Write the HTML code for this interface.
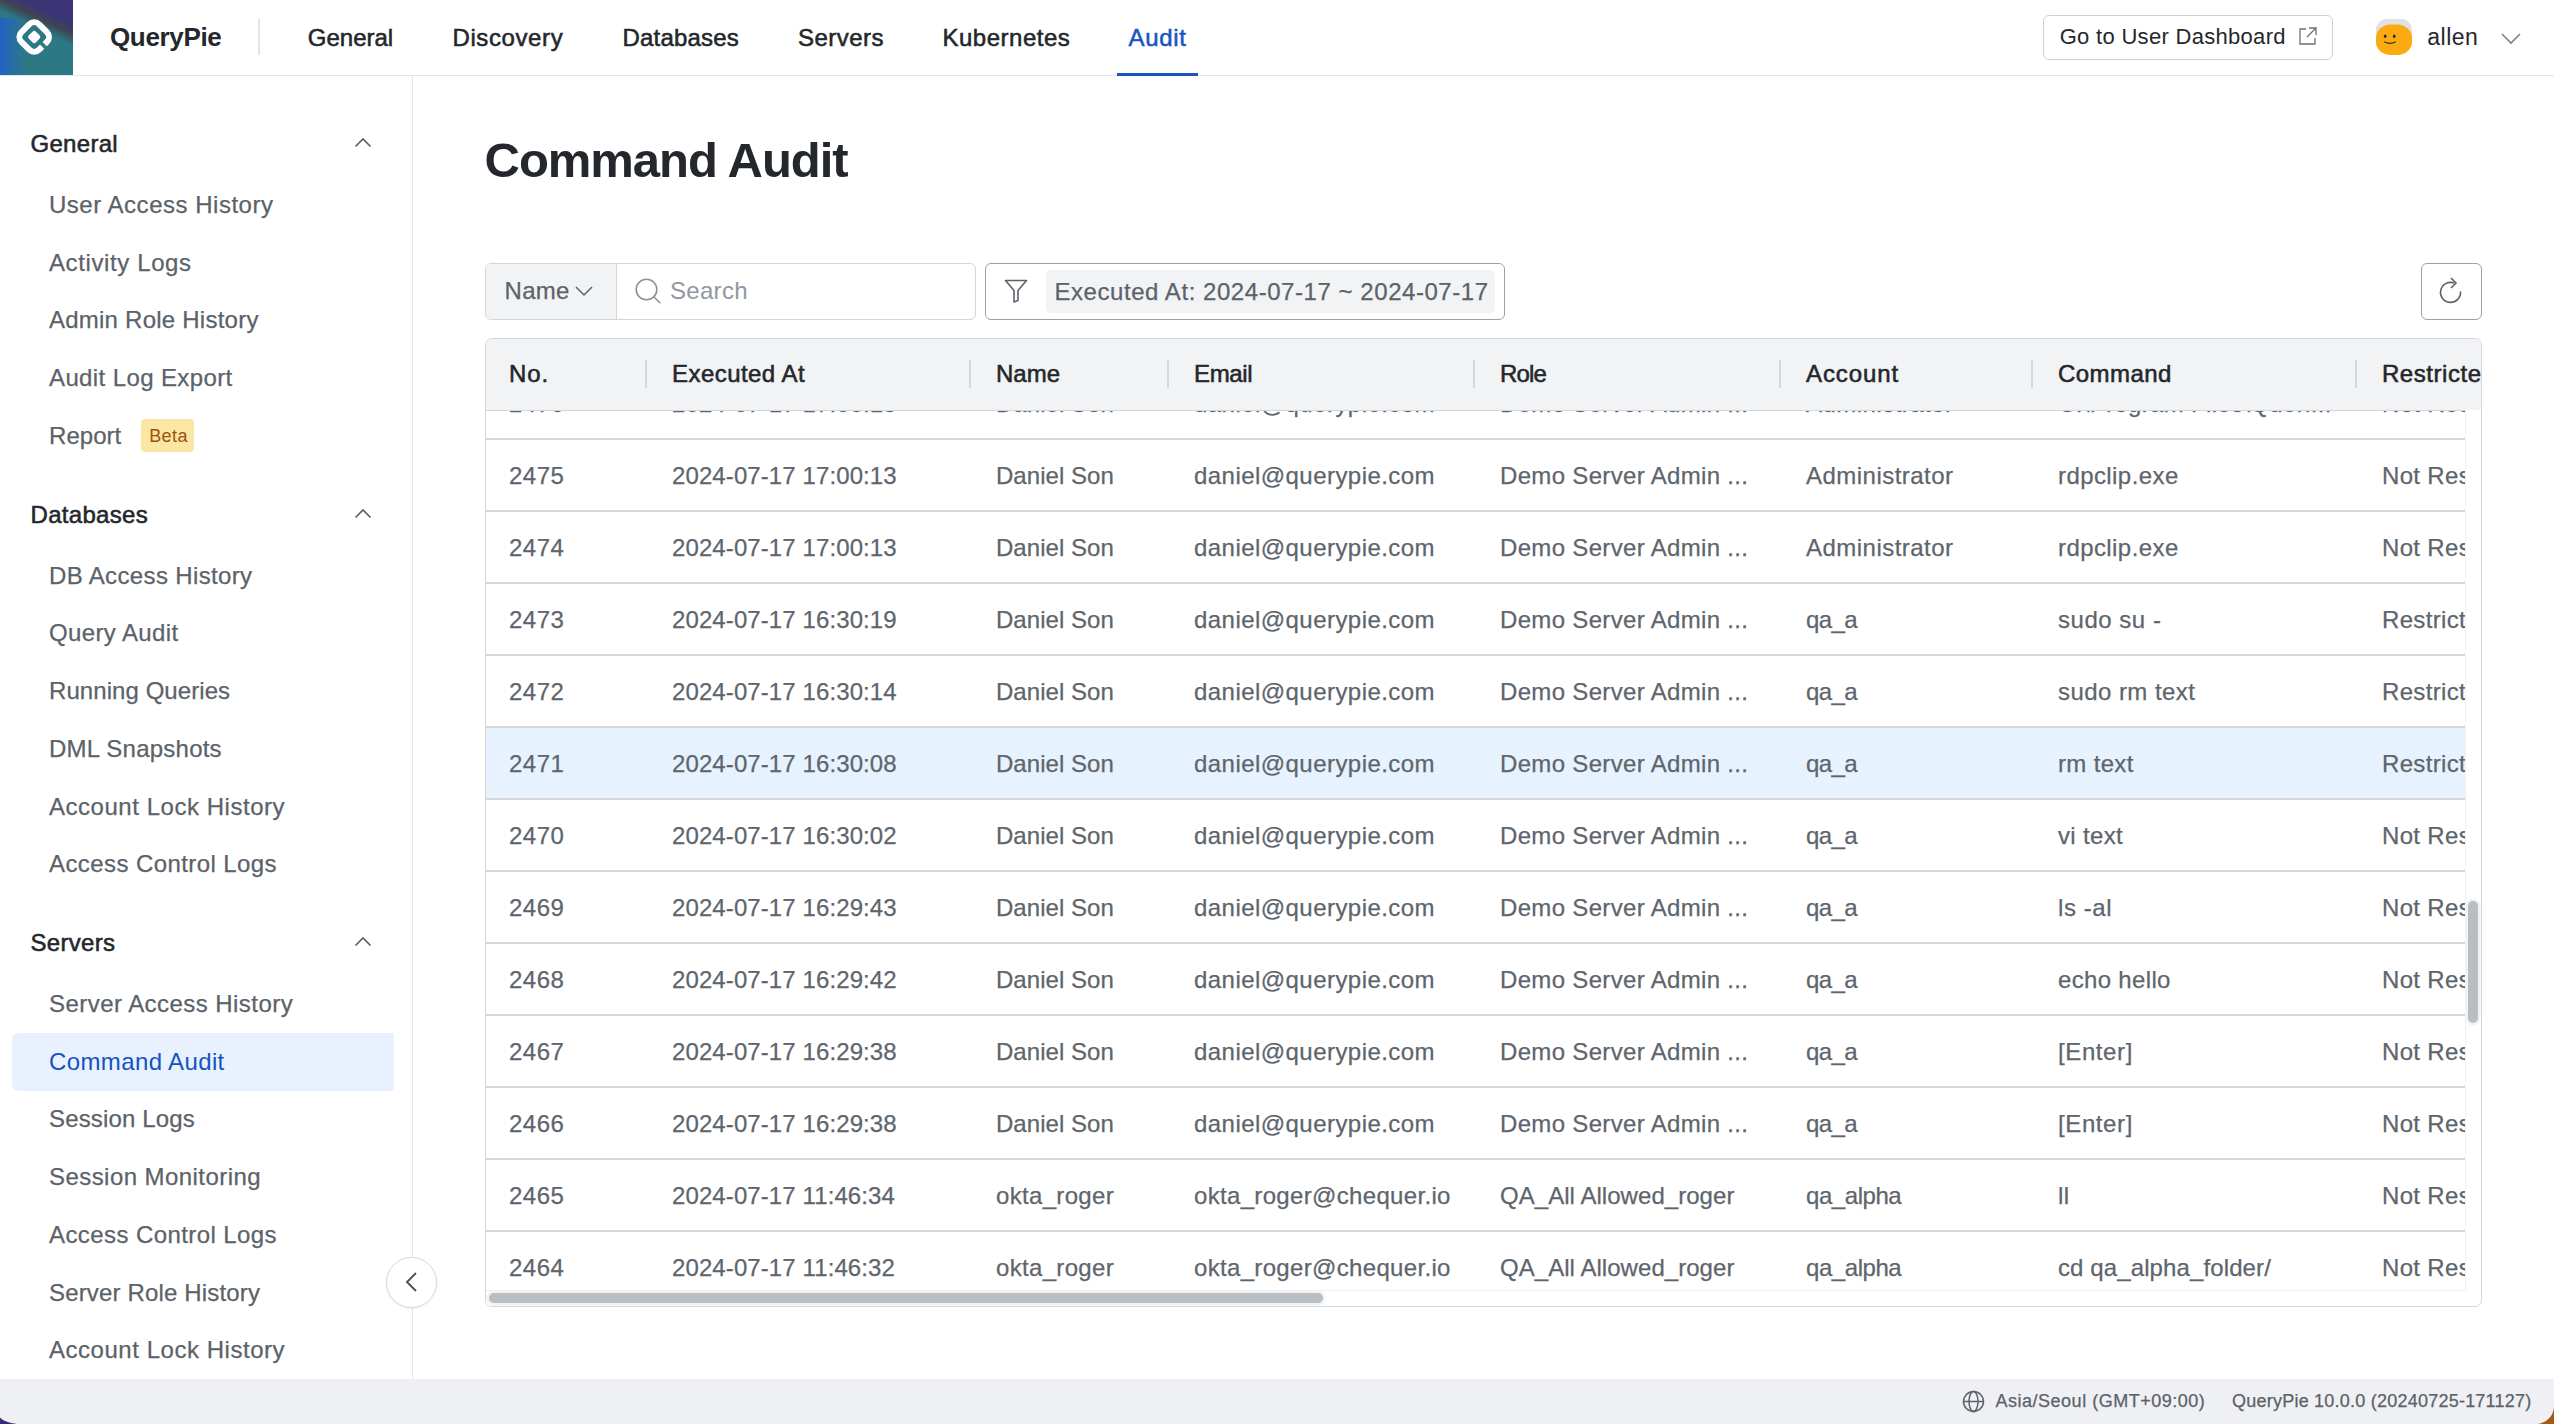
<!DOCTYPE html><html><head><meta charset="utf-8"><style>
*{margin:0;padding:0;box-sizing:border-box}
html,body{width:2554px;height:1424px;overflow:hidden;background:#fff}
body{font-family:"Liberation Sans",sans-serif;color:#25282c;position:relative}
.a{position:absolute;white-space:nowrap}
.t24{font-size:24px;line-height:24px}
.dk{color:#24272b}
.gr{color:#5b6269;-webkit-text-stroke:0.25px currentColor}
.med{-webkit-text-stroke:0.55px currentColor}
#hdr{position:absolute;left:0;top:0;width:2554px;height:76px;border-bottom:1px solid #e3e5e8;background:#fff}
#side{position:absolute;left:0;top:76px;width:413px;height:1303px;border-right:1px solid #e3e5e8;background:#fff}
#foot{position:absolute;left:0;top:1379px;width:2554px;height:45px;background:#eff0f3}
.sep{position:absolute;top:22px;width:2px;height:27px;background:#d3d6da}
.row{position:absolute;left:0;width:1980px;height:72px;background:#fff}
.rl{position:absolute;left:0;height:2px;background:#d5d7db}
.cell{position:absolute;top:27px;font-size:24px;line-height:24px;color:#5e656c;white-space:nowrap;-webkit-text-stroke:0.25px currentColor}
</style></head><body>
<div id="hdr">
<svg class="a" style="left:0;top:0" width="73" height="75" viewBox="0 0 73 75">
  <defs>
    <linearGradient id="lg1" gradientUnits="userSpaceOnUse" x1="60" y1="-10" x2="30" y2="53">
      <stop offset="0" stop-color="#3b3277"/><stop offset="0.36" stop-color="#3c3474"/>
      <stop offset="0.5" stop-color="#3d4652"/><stop offset="0.64" stop-color="#2c7886"/>
      <stop offset="1" stop-color="#2d7885"/>
    </linearGradient>
    <linearGradient id="lg2" x1="0" y1="0" x2="1" y2="0">
      <stop offset="0" stop-color="#1f5fd0" stop-opacity="0.85"/>
      <stop offset="0.35" stop-color="#1f5fd0" stop-opacity="0"/>
    </linearGradient>
  </defs>
  <rect width="73" height="75" fill="url(#lg1)"/>
  <rect x="0" y="18" width="73" height="57" fill="url(#lg2)"/>
  <g transform="translate(34.2 37) rotate(45)">
    <rect x="-12.5" y="-12.5" width="25" height="25" rx="7" fill="#2d7885" stroke="#fff" stroke-width="6"/>
    <rect x="-5" y="-5" width="10" height="10" rx="2.5" fill="#fff"/>
  </g>
  <path d="M39.5 41.5 L47 49" stroke="#2d7885" stroke-width="3.5"/>
</svg>
<div class="a dk" style="left:110px;top:23.59px;font-size:26px;line-height:26px;font-weight:bold;letter-spacing:-0.35px">QueryPie</div>
<div class="a" style="left:258px;top:19px;width:2px;height:36px;background:#e3e5e8"></div>
<div class="a t24 dk med" style="left:307.8px;top:25.58px;letter-spacing:0px">General</div>
<div class="a t24 dk med" style="left:452.5px;top:25.58px;letter-spacing:0.6px">Discovery</div>
<div class="a t24 dk med" style="left:622.5px;top:25.58px;letter-spacing:0.18px">Databases</div>
<div class="a t24 dk med" style="left:798px;top:25.58px;letter-spacing:0.45px">Servers</div>
<div class="a t24 dk med" style="left:942.5px;top:25.58px;letter-spacing:0.5px">Kubernetes</div>
<div class="a t24 med" style="left:1128.5px;top:25.58px;color:#1a56c0;letter-spacing:0.65px">Audit</div>
<div class="a" style="left:1117px;top:73px;width:81px;height:3px;background:#1a56c0"></div>
<div class="a" style="left:2043px;top:15px;width:290px;height:45px;border:1px solid #cfd3d8;border-radius:6px"></div>
<div class="a dk" style="left:2059.7px;top:26.28px;font-size:22px;line-height:22px;letter-spacing:0.3px">Go to User Dashboard</div>
<svg class="a" style="left:2297px;top:25px" width="22" height="22" viewBox="0 0 22 22">
  <path d="M9 4 H3 V19 H18 V13" fill="none" stroke="#6b7178" stroke-width="1.3"/>
  <path d="M12 3 H19 V10 M19 3 L10 12" fill="none" stroke="#6b7178" stroke-width="1.3"/>
</svg>
<svg class="a" style="left:2375px;top:18px" width="38" height="38" viewBox="0 0 38 38">
  <rect x="1" y="1" width="36" height="24" rx="11" fill="#dfe1e5"/>
  <rect x="1" y="6.5" width="36" height="30.5" rx="15" ry="13" fill="#fbab0f"/>
  <ellipse cx="10.2" cy="18.2" rx="1.3" ry="1.7" fill="#1e2a3a"/>
  <ellipse cx="19.2" cy="18.2" rx="1.3" ry="1.7" fill="#1e2a3a"/>
  <path d="M9.8 24 Q15 26.8 20.2 24" fill="none" stroke="#1e2a3a" stroke-width="1.3" stroke-linecap="round"/>
</svg>
<div class="a dk" style="left:2427.3px;top:26.43px;font-size:23px;line-height:23px;letter-spacing:0.5px">allen</div>
<svg class="a" style="left:2500px;top:31px" width="22" height="16" viewBox="0 0 22 16">
  <path d="M2 3 L11 12 L20 3" fill="none" stroke="#7b8289" stroke-width="1.6"/>
</svg>
</div>
<div id="side"></div>
<div class="a t24 dk med" style="left:30.5px;top:132.18px;letter-spacing:0.3px">General</div>
<svg class="a" style="left:353px;top:136.0px" width="20" height="14" viewBox="0 0 20 14">
  <path d="M2.5 10.5 L10 3 L17.5 10.5" fill="none" stroke="#5b6269" stroke-width="1.75"/>
</svg>
<div class="a t24 gr" style="left:49px;top:192.98px;letter-spacing:0.514px">User Access History</div>
<div class="a t24 gr" style="left:49px;top:250.68px;letter-spacing:0.612px">Activity Logs</div>
<div class="a t24 gr" style="left:49px;top:308.38px;letter-spacing:0.235px">Admin Role History</div>
<div class="a t24 gr" style="left:49px;top:366.08px;letter-spacing:0.383px">Audit Log Export</div>
<div class="a t24 gr" style="left:49px;top:423.78px;letter-spacing:0.05px">Report</div>
<div class="a" style="left:141px;top:418.6px;width:53px;height:33px;background:#fce6a4;border-radius:4px"></div>
<div class="a " style="left:149.2px;top:426.86px;font-size:18px;line-height:18px;color:#a0520c;letter-spacing:0.4px">Beta</div>
<div class="a t24 dk med" style="left:30.5px;top:502.98px;letter-spacing:0.3px">Databases</div>
<svg class="a" style="left:353px;top:506.79999999999995px" width="20" height="14" viewBox="0 0 20 14">
  <path d="M2.5 10.5 L10 3 L17.5 10.5" fill="none" stroke="#5b6269" stroke-width="1.75"/>
</svg>
<div class="a t24 gr" style="left:49px;top:563.78px;letter-spacing:0.357px">DB Access History</div>
<div class="a t24 gr" style="left:49px;top:621.48px;letter-spacing:0.37px">Query Audit</div>
<div class="a t24 gr" style="left:49px;top:679.18px;letter-spacing:0.07px">Running Queries</div>
<div class="a t24 gr" style="left:49px;top:736.88px;letter-spacing:0.228px">DML Snapshots</div>
<div class="a t24 gr" style="left:49px;top:794.58px;letter-spacing:0.533px">Account Lock History</div>
<div class="a t24 gr" style="left:49px;top:852.28px;letter-spacing:0.414px">Access Control Logs</div>
<div class="a t24 dk med" style="left:30.5px;top:931.28px;letter-spacing:0.3px">Servers</div>
<svg class="a" style="left:353px;top:935.1px" width="20" height="14" viewBox="0 0 20 14">
  <path d="M2.5 10.5 L10 3 L17.5 10.5" fill="none" stroke="#5b6269" stroke-width="1.75"/>
</svg>
<div class="a t24 gr" style="left:49px;top:992.08px;letter-spacing:0.445px">Server Access History</div>
<div class="a" style="left:12px;top:1033px;width:382px;height:58px;background:#e8f1fd;border-radius:6px 0 0 6px"></div>
<div class="a t24" style="left:49px;top:1049.78px;color:#1553c2;letter-spacing:0.378px">Command Audit</div>
<div class="a t24 gr" style="left:49px;top:1107.48px;letter-spacing:0.152px">Session Logs</div>
<div class="a t24 gr" style="left:49px;top:1165.18px;letter-spacing:0.441px">Session Monitoring</div>
<div class="a t24 gr" style="left:49px;top:1222.88px;letter-spacing:0.414px">Access Control Logs</div>
<div class="a t24 gr" style="left:49px;top:1280.58px;letter-spacing:0.164px">Server Role History</div>
<div class="a t24 gr" style="left:49px;top:1338.28px;letter-spacing:0.533px">Account Lock History</div>
<div class="a" style="left:386px;top:1257px;width:51px;height:51px;border-radius:50%;background:#fff;border:1px solid #d5d8dd;box-shadow:0 1px 3px rgba(0,0,0,0.06)"></div>
<svg class="a" style="left:402px;top:1270px" width="18" height="24" viewBox="0 0 18 24">
  <path d="M14 3 L5 12 L14 21" fill="none" stroke="#4b5259" stroke-width="1.9"/>
</svg>
<div class="a dk" style="left:484.6px;top:136.32px;font-size:49px;line-height:49px;font-weight:bold;letter-spacing:-1.05px">Command Audit</div>
<div class="a" style="left:485px;top:263px;width:491px;height:57px;border:1px solid #d3d6db;border-radius:6px;overflow:hidden"><div style="position:absolute;left:0;top:0;width:131px;height:55px;background:#f2f3f5;border-right:1px solid #d3d6db"></div></div>
<div class="a t24 gr" style="left:504.5px;top:278.98px;letter-spacing:0.3px">Name</div>
<svg class="a" style="left:573px;top:283px" width="22" height="16" viewBox="0 0 22 16">
  <path d="M3 4 L11 12 L19 4" fill="none" stroke="#5b6269" stroke-width="1.5"/>
</svg>
<svg class="a" style="left:632px;top:276px" width="32" height="32" viewBox="0 0 32 32">
  <circle cx="14.5" cy="13.5" r="10.3" fill="none" stroke="#8c9298" stroke-width="1.6"/>
  <path d="M21.8 20.8 L28.3 27.3" stroke="#8c9298" stroke-width="1.6"/>
</svg>
<div class="a t24" style="left:670px;top:278.68px;color:#9097a0;letter-spacing:0.3px">Search</div>
<div class="a" style="left:985px;top:263px;width:520px;height:57px;border:1px solid #9ba1a8;border-radius:6px"></div>
<div class="a" style="left:1046px;top:270px;width:449px;height:43px;background:#f2f3f5;border-radius:5px"></div>
<svg class="a" style="left:1002px;top:277px" width="28" height="28" viewBox="0 0 28 28">
  <path d="M3.5 3.5 H24.5 L16 13.5 V23.5 L12 25 V13.5 Z" fill="none" stroke="#5b6269" stroke-width="1.6" stroke-linejoin="round"/>
</svg>
<div class="a t24 gr" style="left:1054.5px;top:279.68px;letter-spacing:0.55px">Executed At: 2024-07-17 ~ 2024-07-17</div>
<div class="a" style="left:2421px;top:263px;width:61px;height:57px;border:1px solid #9ba1a8;border-radius:6px"></div>
<svg class="a" style="left:2436px;top:276px" width="32" height="32" viewBox="0 0 32 32">
  <path d="M24.5 15.5 A10 10 0 1 1 18 7" fill="none" stroke="#5b6269" stroke-width="1.6"/>
  <path d="M15 2 L20 7 L15 12" fill="none" stroke="#5b6269" stroke-width="1.6"/>
</svg>
<div class="a" style="left:485px;top:338px;width:1997px;height:969px;border:1px solid #d3d6db;border-radius:7px;overflow:hidden;background:#fff">
<div style="position:absolute;left:0;top:0;width:1979px;height:951px;overflow:hidden">
<div class="row" style="top:28px;height:72px;width:1979px;background:#fff"></div>
<div class="cell" style="left:23px;top:53.03px;letter-spacing:0.5px">2476</div>
<div class="cell" style="left:186px;top:53.03px;letter-spacing:0.1px">2024-07-17 17:00:13</div>
<div class="cell" style="left:510px;top:53.03px;letter-spacing:0.04px">Daniel Son</div>
<div class="cell" style="left:708px;top:53.03px;letter-spacing:0.45px">daniel@querypie.com</div>
<div class="cell" style="left:1014px;top:53.03px;letter-spacing:0.33px">Demo Server Admin ...</div>
<div class="cell" style="left:1320px;top:53.03px;letter-spacing:0.47px">Administrator</div>
<div class="cell" style="left:1572px;top:53.03px;letter-spacing:0.33px">C:\Program Files\Queri...</div>
<div class="cell" style="left:1896px;top:53.03px;letter-spacing:0.33px">Not Restricted</div>
<div class="row" style="top:100px;height:72px;width:1979px;background:#fff"></div>
<div class="cell" style="left:23px;top:125.03px;letter-spacing:0.5px">2475</div>
<div class="cell" style="left:186px;top:125.03px;letter-spacing:0.1px">2024-07-17 17:00:13</div>
<div class="cell" style="left:510px;top:125.03px;letter-spacing:0.04px">Daniel Son</div>
<div class="cell" style="left:708px;top:125.03px;letter-spacing:0.45px">daniel@querypie.com</div>
<div class="cell" style="left:1014px;top:125.03px;letter-spacing:0.33px">Demo Server Admin ...</div>
<div class="cell" style="left:1320px;top:125.03px;letter-spacing:0.47px">Administrator</div>
<div class="cell" style="left:1572px;top:125.03px;letter-spacing:0.42px">rdpclip.exe</div>
<div class="cell" style="left:1896px;top:125.03px;letter-spacing:0.33px">Not Restricted</div>
<div class="row" style="top:172px;height:72px;width:1979px;background:#fff"></div>
<div class="cell" style="left:23px;top:197.03px;letter-spacing:0.5px">2474</div>
<div class="cell" style="left:186px;top:197.03px;letter-spacing:0.1px">2024-07-17 17:00:13</div>
<div class="cell" style="left:510px;top:197.03px;letter-spacing:0.04px">Daniel Son</div>
<div class="cell" style="left:708px;top:197.03px;letter-spacing:0.45px">daniel@querypie.com</div>
<div class="cell" style="left:1014px;top:197.03px;letter-spacing:0.33px">Demo Server Admin ...</div>
<div class="cell" style="left:1320px;top:197.03px;letter-spacing:0.47px">Administrator</div>
<div class="cell" style="left:1572px;top:197.03px;letter-spacing:0.42px">rdpclip.exe</div>
<div class="cell" style="left:1896px;top:197.03px;letter-spacing:0.33px">Not Restricted</div>
<div class="row" style="top:244px;height:72px;width:1979px;background:#fff"></div>
<div class="cell" style="left:23px;top:269.03px;letter-spacing:0.5px">2473</div>
<div class="cell" style="left:186px;top:269.03px;letter-spacing:0.1px">2024-07-17 16:30:19</div>
<div class="cell" style="left:510px;top:269.03px;letter-spacing:0.04px">Daniel Son</div>
<div class="cell" style="left:708px;top:269.03px;letter-spacing:0.45px">daniel@querypie.com</div>
<div class="cell" style="left:1014px;top:269.03px;letter-spacing:0.33px">Demo Server Admin ...</div>
<div class="cell" style="left:1320px;top:269.03px;letter-spacing:-0.6px">qa_a</div>
<div class="cell" style="left:1572px;top:269.03px;letter-spacing:0.52px">sudo su -</div>
<div class="cell" style="left:1896px;top:269.03px;letter-spacing:0.33px">Restricted</div>
<div class="row" style="top:316px;height:72px;width:1979px;background:#fff"></div>
<div class="cell" style="left:23px;top:341.03px;letter-spacing:0.5px">2472</div>
<div class="cell" style="left:186px;top:341.03px;letter-spacing:0.1px">2024-07-17 16:30:14</div>
<div class="cell" style="left:510px;top:341.03px;letter-spacing:0.04px">Daniel Son</div>
<div class="cell" style="left:708px;top:341.03px;letter-spacing:0.45px">daniel@querypie.com</div>
<div class="cell" style="left:1014px;top:341.03px;letter-spacing:0.33px">Demo Server Admin ...</div>
<div class="cell" style="left:1320px;top:341.03px;letter-spacing:-0.6px">qa_a</div>
<div class="cell" style="left:1572px;top:341.03px;letter-spacing:0.44px">sudo rm text</div>
<div class="cell" style="left:1896px;top:341.03px;letter-spacing:0.33px">Restricted</div>
<div class="row" style="top:388px;height:72px;width:1979px;background:#e6f2fd"></div>
<div class="cell" style="left:23px;top:413.03px;letter-spacing:0.5px">2471</div>
<div class="cell" style="left:186px;top:413.03px;letter-spacing:0.1px">2024-07-17 16:30:08</div>
<div class="cell" style="left:510px;top:413.03px;letter-spacing:0.04px">Daniel Son</div>
<div class="cell" style="left:708px;top:413.03px;letter-spacing:0.45px">daniel@querypie.com</div>
<div class="cell" style="left:1014px;top:413.03px;letter-spacing:0.33px">Demo Server Admin ...</div>
<div class="cell" style="left:1320px;top:413.03px;letter-spacing:-0.6px">qa_a</div>
<div class="cell" style="left:1572px;top:413.03px;letter-spacing:0.33px">rm text</div>
<div class="cell" style="left:1896px;top:413.03px;letter-spacing:0.33px">Restricted</div>
<div class="row" style="top:460px;height:72px;width:1979px;background:#fff"></div>
<div class="cell" style="left:23px;top:485.03px;letter-spacing:0.5px">2470</div>
<div class="cell" style="left:186px;top:485.03px;letter-spacing:0.1px">2024-07-17 16:30:02</div>
<div class="cell" style="left:510px;top:485.03px;letter-spacing:0.04px">Daniel Son</div>
<div class="cell" style="left:708px;top:485.03px;letter-spacing:0.45px">daniel@querypie.com</div>
<div class="cell" style="left:1014px;top:485.03px;letter-spacing:0.33px">Demo Server Admin ...</div>
<div class="cell" style="left:1320px;top:485.03px;letter-spacing:-0.6px">qa_a</div>
<div class="cell" style="left:1572px;top:485.03px;letter-spacing:0.33px">vi text</div>
<div class="cell" style="left:1896px;top:485.03px;letter-spacing:0.33px">Not Restricted</div>
<div class="row" style="top:532px;height:72px;width:1979px;background:#fff"></div>
<div class="cell" style="left:23px;top:557.03px;letter-spacing:0.5px">2469</div>
<div class="cell" style="left:186px;top:557.03px;letter-spacing:0.1px">2024-07-17 16:29:43</div>
<div class="cell" style="left:510px;top:557.03px;letter-spacing:0.04px">Daniel Son</div>
<div class="cell" style="left:708px;top:557.03px;letter-spacing:0.45px">daniel@querypie.com</div>
<div class="cell" style="left:1014px;top:557.03px;letter-spacing:0.33px">Demo Server Admin ...</div>
<div class="cell" style="left:1320px;top:557.03px;letter-spacing:-0.6px">qa_a</div>
<div class="cell" style="left:1572px;top:557.03px;letter-spacing:0.59px">ls -al</div>
<div class="cell" style="left:1896px;top:557.03px;letter-spacing:0.33px">Not Restricted</div>
<div class="row" style="top:604px;height:72px;width:1979px;background:#fff"></div>
<div class="cell" style="left:23px;top:629.03px;letter-spacing:0.5px">2468</div>
<div class="cell" style="left:186px;top:629.03px;letter-spacing:0.1px">2024-07-17 16:29:42</div>
<div class="cell" style="left:510px;top:629.03px;letter-spacing:0.04px">Daniel Son</div>
<div class="cell" style="left:708px;top:629.03px;letter-spacing:0.45px">daniel@querypie.com</div>
<div class="cell" style="left:1014px;top:629.03px;letter-spacing:0.33px">Demo Server Admin ...</div>
<div class="cell" style="left:1320px;top:629.03px;letter-spacing:-0.6px">qa_a</div>
<div class="cell" style="left:1572px;top:629.03px;letter-spacing:0.33px">echo hello</div>
<div class="cell" style="left:1896px;top:629.03px;letter-spacing:0.33px">Not Restricted</div>
<div class="row" style="top:676px;height:72px;width:1979px;background:#fff"></div>
<div class="cell" style="left:23px;top:701.03px;letter-spacing:0.5px">2467</div>
<div class="cell" style="left:186px;top:701.03px;letter-spacing:0.1px">2024-07-17 16:29:38</div>
<div class="cell" style="left:510px;top:701.03px;letter-spacing:0.04px">Daniel Son</div>
<div class="cell" style="left:708px;top:701.03px;letter-spacing:0.45px">daniel@querypie.com</div>
<div class="cell" style="left:1014px;top:701.03px;letter-spacing:0.33px">Demo Server Admin ...</div>
<div class="cell" style="left:1320px;top:701.03px;letter-spacing:-0.6px">qa_a</div>
<div class="cell" style="left:1572px;top:701.03px;letter-spacing:0.6px">[Enter]</div>
<div class="cell" style="left:1896px;top:701.03px;letter-spacing:0.33px">Not Restricted</div>
<div class="row" style="top:748px;height:72px;width:1979px;background:#fff"></div>
<div class="cell" style="left:23px;top:773.03px;letter-spacing:0.5px">2466</div>
<div class="cell" style="left:186px;top:773.03px;letter-spacing:0.1px">2024-07-17 16:29:38</div>
<div class="cell" style="left:510px;top:773.03px;letter-spacing:0.04px">Daniel Son</div>
<div class="cell" style="left:708px;top:773.03px;letter-spacing:0.45px">daniel@querypie.com</div>
<div class="cell" style="left:1014px;top:773.03px;letter-spacing:0.33px">Demo Server Admin ...</div>
<div class="cell" style="left:1320px;top:773.03px;letter-spacing:-0.6px">qa_a</div>
<div class="cell" style="left:1572px;top:773.03px;letter-spacing:0.6px">[Enter]</div>
<div class="cell" style="left:1896px;top:773.03px;letter-spacing:0.33px">Not Restricted</div>
<div class="row" style="top:820px;height:72px;width:1979px;background:#fff"></div>
<div class="cell" style="left:23px;top:845.03px;letter-spacing:0.5px">2465</div>
<div class="cell" style="left:186px;top:845.03px;letter-spacing:0.1px">2024-07-17 11:46:34</div>
<div class="cell" style="left:510px;top:845.03px;letter-spacing:0.33px">okta_roger</div>
<div class="cell" style="left:708px;top:845.03px;letter-spacing:0.33px">okta_roger@chequer.io</div>
<div class="cell" style="left:1014px;top:845.03px;letter-spacing:0.05px">QA_All Allowed_roger</div>
<div class="cell" style="left:1320px;top:845.03px;letter-spacing:-0.44px">qa_alpha</div>
<div class="cell" style="left:1572px;top:845.03px;letter-spacing:0.33px">ll</div>
<div class="cell" style="left:1896px;top:845.03px;letter-spacing:0.33px">Not Restricted</div>
<div class="row" style="top:892px;height:72px;width:1979px;background:#fff"></div>
<div class="cell" style="left:23px;top:917.03px;letter-spacing:0.5px">2464</div>
<div class="cell" style="left:186px;top:917.03px;letter-spacing:0.1px">2024-07-17 11:46:32</div>
<div class="cell" style="left:510px;top:917.03px;letter-spacing:0.33px">okta_roger</div>
<div class="cell" style="left:708px;top:917.03px;letter-spacing:0.33px">okta_roger@chequer.io</div>
<div class="cell" style="left:1014px;top:917.03px;letter-spacing:0.05px">QA_All Allowed_roger</div>
<div class="cell" style="left:1320px;top:917.03px;letter-spacing:-0.44px">qa_alpha</div>
<div class="cell" style="left:1572px;top:917.03px;letter-spacing:0.11px">cd qa_alpha_folder/</div>
<div class="cell" style="left:1896px;top:917.03px;letter-spacing:0.33px">Not Restricted</div>
<div class="rl" style="top:99px;width:1979px"></div>
<div class="rl" style="top:171px;width:1979px"></div>
<div class="rl" style="top:243px;width:1979px"></div>
<div class="rl" style="top:315px;width:1979px"></div>
<div class="rl" style="top:387px;width:1979px"></div>
<div class="rl" style="top:459px;width:1979px"></div>
<div class="rl" style="top:531px;width:1979px"></div>
<div class="rl" style="top:603px;width:1979px"></div>
<div class="rl" style="top:675px;width:1979px"></div>
<div class="rl" style="top:747px;width:1979px"></div>
<div class="rl" style="top:819px;width:1979px"></div>
<div class="rl" style="top:891px;width:1979px"></div>
<div class="rl" style="top:963px;width:1979px"></div>
</div>
<div style="position:absolute;left:0;top:0;width:1997px;height:72px;background:#f2f3f5;border-bottom:1px solid #d3d6db"></div>
<div class="a t24 dk med" style="left:23px;top:23.08px;letter-spacing:0.95px">No.</div>
<div class="a t24 dk med" style="left:186px;top:23.08px;letter-spacing:0.45px">Executed At</div>
<div class="a t24 dk med" style="left:510px;top:23.08px;letter-spacing:0.04px">Name</div>
<div class="a t24 dk med" style="left:708px;top:23.08px;letter-spacing:-0.36px">Email</div>
<div class="a t24 dk med" style="left:1014px;top:23.08px;letter-spacing:-0.8px">Role</div>
<div class="a t24 dk med" style="left:1320px;top:23.08px;letter-spacing:0.92px">Account</div>
<div class="a t24 dk med" style="left:1572px;top:23.08px;letter-spacing:0.44px">Command</div>
<div class="a t24 dk med" style="left:1896px;top:23.08px;letter-spacing:0.54px">Restricted</div>
<div class="a" style="left:159px;top:21px;width:2px;height:28px;background:#d3d6da"></div>
<div class="a" style="left:483px;top:21px;width:2px;height:28px;background:#d3d6da"></div>
<div class="a" style="left:681px;top:21px;width:2px;height:28px;background:#d3d6da"></div>
<div class="a" style="left:987px;top:21px;width:2px;height:28px;background:#d3d6da"></div>
<div class="a" style="left:1293px;top:21px;width:2px;height:28px;background:#d3d6da"></div>
<div class="a" style="left:1545px;top:21px;width:2px;height:28px;background:#d3d6da"></div>
<div class="a" style="left:1869px;top:21px;width:2px;height:28px;background:#d3d6da"></div>
<div class="a" style="left:1979px;top:71px;width:17px;height:880px;background:#fff;border-left:1px solid #eef0f2"></div>
<div class="a" style="left:1982px;top:562px;width:10px;height:122px;background:#b9bec3;border-radius:5px;box-shadow:0 0 0 2.5px #f1f2f4"></div>
<div class="a" style="left:0;top:951px;width:1979px;height:16px;background:#fff;border-top:1px solid #eff0f2"></div>
<div class="a" style="left:3px;top:954px;width:834px;height:10px;background:#b9bec3;border-radius:5px;box-shadow:0 0 0 2.5px #f1f2f4"></div>
</div>
<div id="foot"></div>
<svg class="a" style="left:1961px;top:1389px" width="25" height="25" viewBox="0 0 25 25">
  <circle cx="12.5" cy="12.5" r="10" fill="none" stroke="#5b6269" stroke-width="1.5"/>
  <ellipse cx="12.5" cy="12.5" rx="4.5" ry="10" fill="none" stroke="#5b6269" stroke-width="1.5"/>
  <path d="M2.5 12.5 H22.5" stroke="#5b6269" stroke-width="1.5"/>
</svg>
<div class="a gr" style="left:1995.5px;top:1391.66px;font-size:18px;line-height:18px;letter-spacing:0.51px">Asia/Seoul (GMT+09:00)</div>
<div class="a gr" style="left:2232px;top:1391.66px;font-size:18px;line-height:18px;letter-spacing:0.23px">QueryPie 10.0.0 (20240725-171127)</div>
<svg class="a" style="left:2530px;top:1400px" width="24" height="24" viewBox="0 0 24 24">
  <path d="M24 5.6 A18 18 0 0 1 6.8 24 L24 24 Z" fill="#a3570f"/>
</svg>
<svg class="a" style="left:0;top:1410px" width="24" height="14" viewBox="0 0 24 14">
  <path d="M0 7.7 Q4 12 17 14 L0 14 Z" fill="#3a2a78"/>
</svg>
</body></html>
